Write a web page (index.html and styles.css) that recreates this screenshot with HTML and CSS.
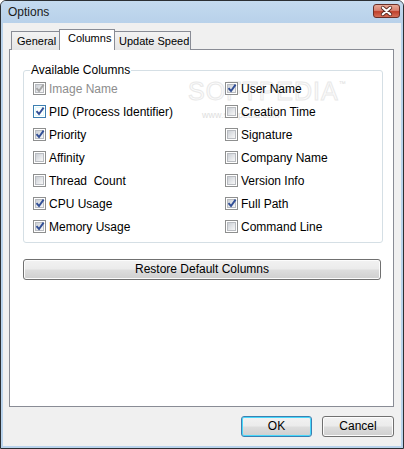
FILE: index.html
```html
<!DOCTYPE html>
<html>
<head>
<meta charset="utf-8">
<link rel="stylesheet" href="styles.css">
</head>
<body>
<div class="window">
  <div class="titlebar">
    <span class="title">Options</span>
    <span class="close">
      <svg width="27" height="14" viewBox="0 0 27 14">
        <path d="M9.5 3.5 L17.5 10.5 M17.5 3.5 L9.5 10.5" stroke="#5a2a22" stroke-width="4.2" stroke-linecap="round"/>
        <path d="M9.5 3.5 L17.5 10.5 M17.5 3.5 L9.5 10.5" stroke="#ffffff" stroke-width="2.4" stroke-linecap="round"/>
      </svg>
    </span>
  </div>
  <div class="client">
    <div class="tabs">
      <div class="tab t-general">General</div>
      <div class="tab t-columns active">Columns</div>
      <div class="tab t-speed">Update Speed</div>
    </div>
    <div class="panel">
      <fieldset class="group">
        <legend>Available Columns</legend>
        <div class="watermark">SOFTPEDIA<sup>™</sup></div>
        <div class="watermark-url">www.softpedia.com</div>
        <div class="grid">
          <label class="item disabled"><span class="cb checked"></span>Image Name</label>
          <label class="item"><span class="cb checked"></span>User Name</label>
          <label class="item"><span class="cb checked hot"></span>PID (Process Identifier)</label>
          <label class="item"><span class="cb"></span>Creation Time</label>
          <label class="item"><span class="cb checked"></span>Priority</label>
          <label class="item"><span class="cb"></span>Signature</label>
          <label class="item"><span class="cb"></span>Affinity</label>
          <label class="item"><span class="cb"></span>Company Name</label>
          <label class="item"><span class="cb"></span>Thread&nbsp; Count</label>
          <label class="item"><span class="cb"></span>Version Info</label>
          <label class="item"><span class="cb checked"></span>CPU Usage</label>
          <label class="item"><span class="cb checked"></span>Full Path</label>
          <label class="item"><span class="cb checked"></span>Memory Usage</label>
          <label class="item"><span class="cb"></span>Command Line</label>
        </div>
      </fieldset>
      <div class="btn restore">Restore Default Columns</div>
    </div>
    <div class="footer">
      <div class="btn ok">OK</div>
      <div class="btn cancel">Cancel</div>
    </div>
  </div>
</div>
</body>
</html>
```
FILE: styles.css
```css
html, body {
  margin: 0;
  padding: 0;
  background: #ffffff;
}
body {
  font-family: "Liberation Sans", Arial, sans-serif;
  font-size: 12px;
  color: #000;
}
.window {
  box-sizing: border-box;
  width: 404px;
  height: 449px;
  border: 1px solid #2b2f33;
  border-radius: 6px 6px 0 0;
  background: #b9d3ec;
  padding: 0 2px 2px 2px;
  display: flex;
  flex-direction: column;
}
.titlebar {
  height: 22px;
  flex: none;
  display: flex;
  align-items: flex-start;
  justify-content: space-between;
  background: linear-gradient(#c4daef, #b8d1ea);
  margin: 0 -2px;
  padding: 0 3px 0 7px;
  border-radius: 5px 5px 0 0;
}
.title {
  font-size: 12px;
  line-height: 22px;
  color: #1a1a1a;
}
.close {
  margin-top: 3px;
  width: 27px;
  height: 14px;
  box-sizing: border-box;
  border: 1px solid #6a2f27;
  border-radius: 3px;
  background: linear-gradient(#e9a996 0%, #d88171 45%, #c0412b 55%, #d56f58 100%);
  display: flex;
  align-items: center;
  justify-content: center;
  overflow: hidden;
}
.close svg { display: block; margin-top: -1px; }
.client {
  flex: 1;
  background: #f0f0f0;
  display: flex;
  flex-direction: column;
  padding: 7px 7px 0 6px;
}
.tabs {
  display: flex;
  align-items: flex-end;
  height: 20px;
  padding-left: 2px;
  position: relative;
  z-index: 2;
  margin-bottom: -1px;
}
.tab {
  box-sizing: border-box;
  height: 19px;
  border: 1px solid #898c95;
  border-bottom: none;
  background: linear-gradient(#f3f3f3, #e5e5e5);
  padding-left: 5px;
  line-height: 18px;
  font-size: 11px;
  white-space: nowrap;
  overflow: hidden;
}
.t-general { width: 48px; border-right: none; }
.t-columns { width: 56px; }
.t-speed { width: 76px; border-left: none; padding-left: 4px; }
.tab.active {
  height: 21px;
  background: #ffffff;
  padding-left: 8px;
  line-height: 16px;
}
.panel {
  box-sizing: border-box;
  height: 358px;
  flex: none;
  background: #ffffff;
  border: 1px solid #898c95;
  padding: 13px 10px 0 13px;
  position: relative;
  z-index: 1;
}
.group {
  margin: 0;
  border: 1px solid #d5dfe5;
  border-radius: 3px;
  padding: 0 0 4px 6px;
  position: relative;
}
.group legend {
  padding: 0 1px;
  line-height: 14px;
  font-size: 12px;
}
.grid {
  display: grid;
  grid-template-columns: 192px 1fr;
  grid-auto-rows: 23px;
  margin-left: 3px;
  position: relative;
  z-index: 1;
}
.item {
  display: flex;
  align-items: center;
  gap: 3px;
  white-space: nowrap;
}
.item.disabled { color: #8d8d8d; }
.cb {
  box-sizing: border-box;
  width: 13px;
  height: 13px;
  flex: none;
  border: 1px solid #8e8f8f;
  background: #ffffff;
  position: relative;
}
.cb::before {
  content: "";
  position: absolute;
  left: 1px; top: 1px; right: 1px; bottom: 1px;
  background: linear-gradient(135deg, #cbcfd5 0%, #e4e6e9 55%, #f7f7f7 100%);
  border: 1px solid #b9bcc1;
  box-sizing: border-box;
}
.cb.hot { border-color: #3c7fb1; }
.cb.hot::before {
  background: #ffffff;
  border-color: #def9fa;
}
.cb.checked::after {
  content: "";
  position: absolute;
  left: 1px; top: 0px;
  width: 10px; height: 10px;
  background: url("data:image/svg+xml;utf8,<svg xmlns='http://www.w3.org/2000/svg' width='10' height='10' viewBox='0 0 10 10'><path d='M1.5 5.2 L4 8 L8.6 1.6' fill='none' stroke='%23324f96' stroke-width='1.9'/></svg>") no-repeat;
}
.item.disabled .cb.checked::after {
  background: url("data:image/svg+xml;utf8,<svg xmlns='http://www.w3.org/2000/svg' width='10' height='10' viewBox='0 0 10 10'><path d='M1.5 5.2 L4 8 L8.6 1.6' fill='none' stroke='%23a6a6a6' stroke-width='1.9'/></svg>") no-repeat;
}
.watermark {
  position: absolute;
  left: 164px;
  top: 0px;
  font-size: 25px;
  letter-spacing: 1px;
  color: #fdfdfd;
  -webkit-text-stroke: 1px #e9e9e9;
  z-index: 0;
}
.watermark sup { font-size: 7px; -webkit-text-stroke: 0; color: #dddddd; vertical-align: 14px; }
.watermark-url {
  position: absolute;
  left: 178px;
  top: 33px;
  font-size: 9px;
  color: #dedede;
  z-index: 0;
}
.btn {
  box-sizing: border-box;
  height: 21px;
  border: 1px solid #707070;
  border-radius: 3px;
  background: linear-gradient(#f2f2f2 0%, #ebebeb 48%, #dddddd 52%, #cfcfcf 100%);
  box-shadow: inset 0 0 0 1px #fcfcfc;
  text-align: center;
  line-height: 19px;
  font-size: 12px;
}
.restore {
  margin-top: 16px;
  width: 358px;
}
.footer {
  display: flex;
  justify-content: flex-end;
  gap: 10px;
  padding-top: 9px;
}
.ok {
  width: 71px;
  border-color: #3c7fb1;
  box-shadow: inset 0 0 0 1px #48d8fb;
}
.cancel {
  width: 72px;
}
```
